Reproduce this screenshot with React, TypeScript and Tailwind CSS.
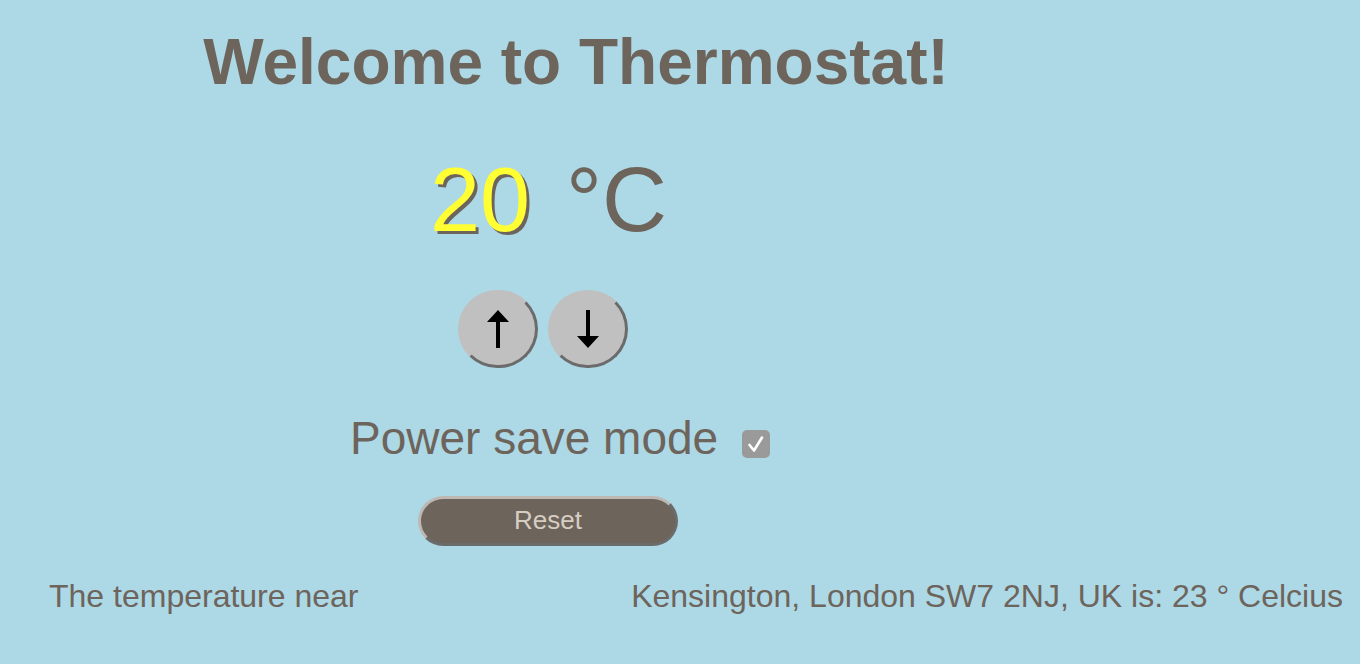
import React, { useState } from "react";

function Arrow({ down }: { down?: boolean }) {
  return (
    <svg width="24" height="40" viewBox="0 0 24 40" className={down ? "rotate-180" : ""}>
      <path d="M12 1 L23 13 L14 13 L14 39 L10 39 L10 13 L1 13 Z" fill="black" />
    </svg>
  );
}

export default function App() {
  const [temp, setTemp] = useState(20);
  const [powerSave, setPowerSave] = useState(true);

  return (
    <div className="min-h-[664px] w-full bg-[#add8e6] text-[#6d645b] font-['Liberation_Sans',Arial,sans-serif] overflow-hidden">
      {/* Title */}
      <div className="w-[1152px] pt-[24px] text-center">
        <h1 className="text-[64px] font-bold leading-[1.2]">Welcome to Thermostat!</h1>
      </div>

      {/* Temperature readout */}
      <div className="mt-[54px] flex items-baseline pl-[430px] text-[90px] leading-[1]">
        <span className="text-[#ffff33] [text-shadow:3px_3px_0_#6d645b]">{temp}</span>
        <span className="ml-[36px]">°C</span>
      </div>

      {/* Up / down */}
      <div className="mt-[45px] flex gap-[10px] pl-[458px]">
        <button
          onClick={() => setTemp(temp + 1)}
          className="flex h-[78px] w-[80px] items-center justify-center rounded-full border-[3px] border-t-[#c0c0c0] border-l-[#c0c0c0] border-r-[#6b6b6b] border-b-[#6b6b6b] bg-[#c0c0c0]"
        >
          <Arrow />
        </button>
        <button
          onClick={() => setTemp(temp - 1)}
          className="flex h-[78px] w-[80px] items-center justify-center rounded-full border-[3px] border-t-[#c0c0c0] border-l-[#c0c0c0] border-r-[#6b6b6b] border-b-[#6b6b6b] bg-[#c0c0c0]"
        >
          <Arrow down />
        </button>
      </div>

      {/* Power save */}
      <div className="mt-[43px] flex items-center pl-[350px]">
        <span className="text-[46px] leading-[1.2]">Power save mode</span>
        <button
          onClick={() => setPowerSave(!powerSave)}
          className="ml-[24px] mt-[12px] flex h-[28px] w-[28px] items-center justify-center rounded-[5px] bg-[#9b9a9b]"
        >
          {powerSave && (
            <svg width="20" height="20" viewBox="0 0 20 20" fill="none">
              <path d="M3.5 11 L8 16.5 L16 3.5" stroke="white" strokeWidth="2.6" strokeLinecap="round" strokeLinejoin="round" />
            </svg>
          )}
        </button>
      </div>

      {/* Reset */}
      <div className="mt-[30px] pl-[418px]">
        <button
          onClick={() => setTemp(20)}
          className="h-[50px] w-[260px] rounded-full border-[3px] border-t-[#bdb8b3] border-l-[#bdb8b3] border-r-[#6b6b6b] border-b-[#6b6b6b] bg-[#6d645b] text-[26px] text-[#d8cdc2]"
        >
          Reset
        </button>
      </div>

      {/* Outside temperature */}
      <div className="mt-[31px] flex justify-between pl-[49px] pr-[17px] text-[32px] leading-[1.2]">
        <span>The temperature near</span>
        <span>Kensington, London SW7 2NJ, UK is: 23 ° Celcius</span>
      </div>
    </div>
  );
}
